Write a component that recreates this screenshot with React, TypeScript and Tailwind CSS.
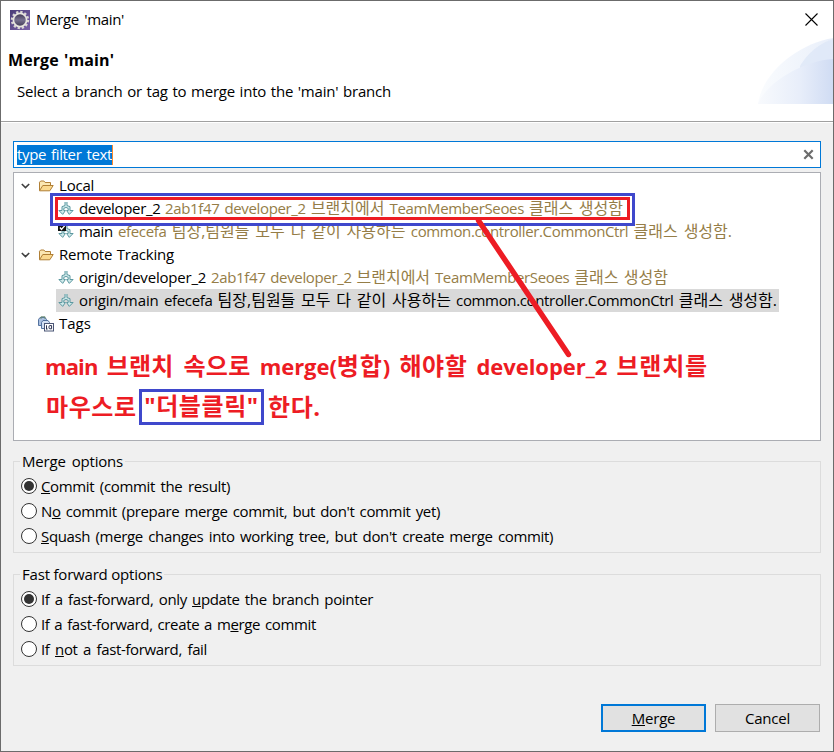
import type { ReactNode } from 'react';

const spread = 'block whitespace-nowrap [text-align-last:justify]';

function Ko({ children }: { children: ReactNode }) {
  return <span className="text-[16px] tracking-normal">{children}</span>;
}

function EclipseIcon() {
  return (
    <svg width="20" height="20" viewBox="0 0 20 20">
      <defs>
        <linearGradient id="gearBg" x1="0" y1="0" x2="1" y2="1">
          <stop offset="0" stopColor="#4a3d78" />
          <stop offset="1" stopColor="#7b62a8" />
        </linearGradient>
        <linearGradient id="gearHole" x1="0" y1="0" x2="0" y2="1">
          <stop offset="0" stopColor="#3c3350" />
          <stop offset="0.5" stopColor="#77718f" />
          <stop offset="1" stopColor="#3f3852" />
        </linearGradient>
      </defs>
      <rect width="20" height="20" fill="url(#gearBg)" />
      <circle cx="10" cy="10" r="8" fill="none" stroke="#d9d7d4" strokeWidth="2.4" strokeDasharray="2.3 1.89" />
      <circle cx="10" cy="10" r="6.6" fill="url(#gearHole)" stroke="#e8e6e0" strokeWidth="1.7" />
    </svg>
  );
}

function FolderIcon() {
  return (
    <svg width="16" height="16" viewBox="0 0 16 16" className="shrink-0">
      <path d="M1.5 12.5V4.2L2.7 3h3.2l1.2 1.5h5.4v3" fill="#fbe7b2" stroke="#b07f35" />
      <path d="M1.5 12.8 4.8 7.5h10.4l-3.4 5.3z" fill="#fad98f" stroke="#b07f35" strokeLinejoin="round" />
    </svg>
  );
}

function BranchIcon({ checked }: { checked?: boolean }) {
  return (
    <svg width="16" height="16" viewBox="0 0 16 16" className="shrink-0">
      <path
        d="M7 1v3.6L4 5.6v3.9H.9L4.7 13.4 7.4 9.5H5.8V7.4L8 6.4l2.2 1v2.1H8.6l2.7 3.9 3.8-3.9H12V5.6L9 4.6V1"
        fill="#cfe9ea"
        stroke="#5c98a0"
        strokeWidth="1"
        strokeLinejoin="round"
      />
      {checked && (
        <g>
          <rect x="0" y="0" width="8" height="7" fill="#111" />
          <path d="M2 3.5 3.5 5.5 6.8 1.6" fill="none" stroke="#fff" strokeWidth="1.3" />
        </g>
      )}
    </svg>
  );
}

function TagsIcon() {
  return (
    <svg width="16" height="16" viewBox="0 0 16 16" className="shrink-0">
      <path d="M.5 9.5v-6l1.5-2h5l1.5 2v6z" fill="#a9bfe0" stroke="#54729f" />
      <path d="M3.5 12.5v-6l1.5-2h5l1.5 2v6z" fill="#d3e0f3" stroke="#54729f" />
      <path d="M3 3V.8h4V3" fill="none" stroke="#6b8c74" />
      <rect x="6.5" y="7.5" width="9" height="7.5" fill="#fff" stroke="#4b5676" />
      <path d="M8.5 9.3v3.8M12 9.6h1.6v3.2H12a1 1 0 0 1-1-1v-1.2a1 1 0 0 1 1-1zM8 13h1.6" fill="none" stroke="#2b3352" />
    </svg>
  );
}

function Chevron() {
  return (
    <svg width="9" height="6" viewBox="0 0 9 6" className="shrink-0">
      <path d="M.8 1 4.5 4.6 8.2 1" fill="none" stroke="#404040" strokeWidth="1.6" />
    </svg>
  );
}

function FolderRow({ label, width }: { label: string; width: string }) {
  return (
    <div className="flex h-[23px] items-center pl-[7px]">
      <Chevron />
      <span className="ml-[8px] flex"><FolderIcon /></span>
      <span className={`ml-[5px] tracking-[-0.2px] ${spread} ${width}`}>{label}</span>
    </div>
  );
}

function RefRow({ name, nameWidth, message, messageWidth, checked, selected }: {
  name: string; nameWidth: string; message: ReactNode; messageWidth: string; checked?: boolean; selected?: boolean;
}) {
  return (
    <div className="flex h-[23px] pl-[42px]">
      <div className={`flex items-center pl-[2px] pr-[2px] ${selected ? 'bg-[#d9d9d9]' : ''}`}>
        <BranchIcon checked={checked} />
        <span className={`ml-[5px] whitespace-nowrap ${nameWidth}`}>{name}</span>
        <span className={`${spread} ${messageWidth} ${selected ? '' : 'text-[#957d47]'}`}>{message}</span>
      </div>
    </div>
  );
}

function Radio({ checked, width, children }: { checked?: boolean; width: string; children: ReactNode }) {
  return (
    <label className="flex h-[25px] items-center">
      <span className="-mt-px flex size-4 shrink-0 items-center justify-center rounded-full border border-[#333] bg-white">
        {checked && <span className="size-[10px] rounded-full bg-[#333]" />}
      </span>
      <span className={`ml-1 ${spread} ${width}`}>{children}</span>
    </label>
  );
}

function Group({ title, width, children }: { title: string; width: string; children: ReactNode }) {
  return (
    <fieldset className="relative h-[92px] border border-[#dcdcdc] pl-[7px] pt-[12px]">
      <span className={`absolute -top-[11px] left-[6px] bg-[#f0f0f0] px-[2px] leading-5 tracking-[-0.2px] ${width}`}>
        <span className={spread}>{title}</span>
      </span>
      {children}
    </fieldset>
  );
}

export default function App() {
  return (
    <div className="relative flex h-[752px] w-[834px] flex-col overflow-hidden border border-[#6b6b6b] bg-[#f0f0f0] font-['Open_Sans','Noto_Sans_CJK_KR',sans-serif] text-[15px] leading-[23px] tracking-[-0.35px] text-black">
      <header className="relative h-[122px] shrink-0 border-b border-white bg-white">
        <div className="flex h-[37px] items-center pl-[9px]">
          <EclipseIcon />
          <span className={`-mt-[2px] ml-[6px] w-[88px] leading-5 ${spread}`}>Merge 'main'</span>
          <svg width="13" height="13" viewBox="0 0 13 13" className="ml-auto mr-[15px]">
            <path d="M.5.5l12 12M12.5.5l-12 12" stroke="#000" strokeWidth="1.1" />
          </svg>
        </div>
        <svg width="75" height="67" viewBox="0 0 75 67" className="absolute right-0 top-[37px]">
          <defs>
            <linearGradient id="banner">
              <stop offset="0" stopColor="#f8fafd" />
              <stop offset="0.55" stopColor="#e8eefa" />
              <stop offset="1" stopColor="#d0dcf3" />
            </linearGradient>
            <linearGradient id="bannerTop">
              <stop offset="0" stopColor="#fafcfe" />
              <stop offset="1" stopColor="#e9effa" />
            </linearGradient>
          </defs>
          <path d="M0 66C4 34 42 5 75 0v66z" fill="url(#bannerTop)" />
          <path d="M42 28Q54 8 75 1v65H42z" fill="#dbe5f6" opacity=".7" />
          <path d="M0 66C8 45 44 23 75 21v45z" fill="url(#banner)" />
        </svg>
        <h1 className={`ml-[7px] mt-[12px] w-[106px] text-[16px] font-bold leading-5 tracking-[0.1px] ${spread}`}>Merge 'main'</h1>
        <p className={`ml-[16px] mt-[11px] w-[374px] leading-5 tracking-[-0.2px] ${spread}`}>Select a branch or tag to merge into the 'main' branch</p>
        <div className="absolute bottom-0 left-0 h-px w-full bg-[#a0a0a0]" />
      </header>

      <main className="flex grow flex-col px-3 pt-[18px]">
        <div className="flex h-[27px] w-[808px] shrink-0 items-center border border-[#0078d7] bg-white pl-[3px] pr-[6px]">
          <span className={`h-5 w-[96px] border-r border-[#ff8728] bg-[#0078d7] leading-[18px] text-white ${spread}`}>type filter text</span>
          <svg width="11" height="11" viewBox="0 0 11 11" className="ml-auto">
            <path d="M1.3 1.3l8.4 8.4M9.7 1.3l-8.4 8.4" stroke="#6c6c6c" strokeWidth="2.2" />
          </svg>
        </div>

        <section className="mt-1 h-[269px] w-[808px] shrink-0 border border-[#abadb3] bg-white pt-px">
          <FolderRow label="Local" width="w-[35px]" />
          <RefRow name="developer_2" nameWidth="w-[86px]" messageWidth="w-[458px]"
            message={<>2ab1f47 developer_2 <Ko>브랜치에서</Ko> TeamMemberSeoes <Ko>클래스 생성함</Ko></>} />
          <RefRow checked name="main" nameWidth="w-[39px]" messageWidth="w-[614px]"
            message={<>efecefa <Ko>팀장,팀원들 모두 다 같이 사용하는</Ko> common.controller.CommonCtrl <Ko>클래스 생성함.</Ko></>} />
          <FolderRow label="Remote Tracking" width="w-[115px]" />
          <RefRow name="origin/developer_2" nameWidth="w-[132px] tracking-[-0.2px]" messageWidth="w-[457px]"
            message={<>2ab1f47 developer_2 <Ko>브랜치에서</Ko> TeamMemberSeoes <Ko>클래스 생성함</Ko></>} />
          <RefRow selected name="origin/main" nameWidth="w-[85px] tracking-[-0.1px]" messageWidth="w-[613px]"
            message={<>efecefa <Ko>팀장,팀원들 모두 다 같이 사용하는</Ko> common.controller.CommonCtrl <Ko>클래스 생성함.</Ko></>} />
          <div className="flex h-[23px] items-center pl-[24px]">
            <TagsIcon />
            <span className="ml-[5px] tracking-normal">Tags</span>
          </div>
        </section>

        <div className="mt-5 w-[808px]">
          <Group title="Merge options" width="w-[105px]">
            <Radio checked width="w-[189px]"><u>C</u>ommit (commit the result)</Radio>
            <Radio width="w-[399px]">N<u>o</u> commit (prepare merge commit, but don't commit yet)</Radio>
            <Radio width="w-[512px]"><u>S</u>quash (merge changes into working tree, but don't create merge commit)</Radio>
          </Group>
        </div>
        <div className="mt-[21px] w-[808px]">
          <Group title="Fast forward options" width="w-[144px]">
            <Radio checked width="w-[332px]">If a fast-forward, only <u>u</u>pdate the branch pointer</Radio>
            <Radio width="w-[275px]">If a fast-forward, create a m<u>e</u>rge commit</Radio>
            <Radio width="w-[166px]">If <u>n</u>ot a fast-forward, fail</Radio>
          </Group>
        </div>

        <footer className="mt-[38px] flex w-[807px] justify-end gap-[9px]">
          <button className="h-7 w-[105px] border-2 border-[#0078d7] bg-[#e1e1e1] leading-5 tracking-[-0.2px]"><u>M</u>erge</button>
          <button className="h-7 w-[105px] border border-[#adadad] bg-[#e1e1e1] leading-5 tracking-[-0.2px]">Cancel</button>
        </footer>
      </main>

      <div className="absolute left-[49px] top-[192px] h-[33px] w-[585px] border-[3px] border-[#3f48cc]">
        <div className="h-full border-x-2 border-b-[3px] border-t border-white">
          <div className="h-full border-[3px] border-[#ed1c24]" />
        </div>
      </div>
      <svg width="100" height="144" viewBox="0 0 100 144" className="absolute left-[473px] top-[214px]">
        <path d="M4.5 5.5 94.5 139.5" stroke="#ed1c24" strokeWidth="5.4" strokeLinecap="round" />
      </svg>
      <div className="absolute left-[44px] top-[350px] text-[22px] font-bold leading-[32px] tracking-[-0.05px] text-[#ed1c24]">
        <p className={`-mt-px w-[663px] ${spread}`}>
          <span className="tracking-[-0.9px]">main</span> <span className="text-[24px] tracking-[0.2px]">브랜치 속으로</span> merge(<span className="text-[24px] tracking-[0.9px]">병합</span>){' '}
          <span className="text-[24px] tracking-[0.5px]">해야할</span> developer_2 <span className="text-[24px] tracking-[0.8px]">브랜치를</span>
        </p>
        <p className="mt-[7px] flex items-center text-[24px] tracking-[0.6px]">
          <span className="w-[94px] whitespace-nowrap pl-px">마우스로</span>
          <span className="flex h-9 w-[125px] items-center justify-center whitespace-nowrap border-[3px] border-[#3f48cc] pb-[2px]">"더블클릭"</span>
          <span className="ml-[4px]">한다.</span>
        </p>
      </div>
      <div className="absolute -left-px top-[49px] h-[14px] w-px bg-[#4b0f36]" />
      <div className="absolute -left-px top-[174px] h-[12px] w-px bg-[#4b0f36]" />
    </div>
  );
}
